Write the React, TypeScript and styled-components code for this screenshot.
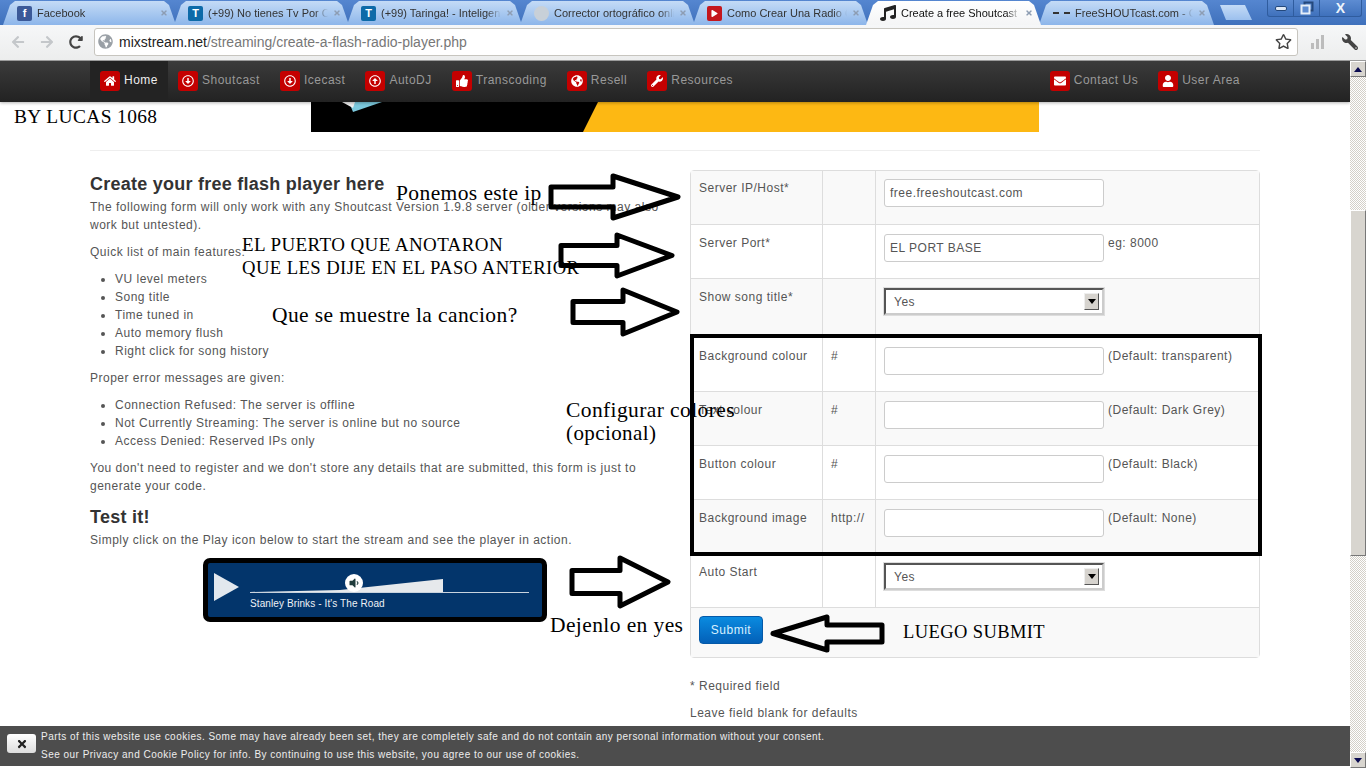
import React from "react";
import styled, { createGlobalStyle } from "styled-components";
import {
	FaHome,
	FaThumbsUp,
	FaGlobeAmericas,
	FaWrench,
	FaEnvelope,
	FaUser,
	FaRegArrowAltCircleDown,
	FaRegArrowAltCircleUp,
	FaPlay,
	FaTimes,
	FaMusic,
	FaRegStar,
	FaArrowLeft,
	FaArrowRight,
	FaRedoAlt,
	FaVolumeDown
} from "react-icons/fa";

const GlobalStyle = createGlobalStyle`
	html, body {
		margin: 0;
		padding: 0;
		height: 768px;
		overflow: hidden;
		background: #fff;
		font-family: "Liberation Sans", Arial, sans-serif;
	}
`;

const Shell = styled.div`
	width: 1366px;
	height: 768px;
	display: flex;
	flex-direction: column;
	position: relative;
	overflow: hidden;
`;

const TabStrip = styled.div`
	height: 25px;
	display: flex;
	align-items: flex-end;
	padding-left: 1px;
	background: linear-gradient(#5586d0, #3f71bc);
	position: relative;
`;

const Tab = styled.div<{ $active?: boolean }>`
	width: 177px;
	height: 24px;
	margin-right: -4px;
	padding: 0 10px 0 14px;
	box-sizing: border-box;
	display: flex;
	align-items: center;
	gap: 5px;
	font-size: 11px;
	color: ${p => (p.$active ? "#111" : "#333")};
	background: ${p => (p.$active ? "linear-gradient(#fff, #f4f5f6)" : "linear-gradient(#c4dbf6, #8db6ea)")};
	clip-path: polygon(0 100%, 7px 4px, 12px 0, calc(100% - 14px) 0, calc(100% - 9px) 4px, calc(100% - 2px) 100%);
	z-index: ${p => (p.$active ? 2 : 1)};
	&:first-child {
		width: 175px;
		margin-left: 2px;
	}
`;

const TabTitle = styled.span`
	flex: 1;
	white-space: nowrap;
	overflow: hidden;
	mask-image: linear-gradient(to right, #000 calc(100% - 14px), transparent);
`;

const TabClose = styled(FaTimes)`
	width: 8px;
	height: 8px;
	color: #8d9db3;
	flex: none;
`;

const FavSquare = styled.span<{ $bg: string; $round?: boolean }>`
	width: 15px;
	height: 15px;
	flex: none;
	display: flex;
	align-items: center;
	justify-content: center;
	background: ${p => p.$bg};
	border-radius: ${p => (p.$round ? "50%" : "2px")};
	color: #fff;
	font-weight: bold;
	font-size: 11px;
	line-height: 15px;
`;

const DashFav = styled.span`
	width: 17px;
	flex: none;
	border-top: 2px dashed #333;
`;

const NewTab = styled.div`
	width: 32px;
	height: 15px;
	margin-left: 8px;
	margin-bottom: 5px;
	background: linear-gradient(#c4dbf6, #9cc0ee);
	clip-path: polygon(0 0, calc(100% - 7px) 0, 100% 100%, 6px 100%);
`;

const WindowControls = styled.div`
	margin-left: auto;
	margin-right: 4px;
	align-self: flex-start;
	display: flex;
	height: 16px;
	border: 1px solid #2f5c9e;
	border-top: 0;
	border-radius: 0 0 3px 3px;
	background: linear-gradient(#5d8cd2, #3f71bc);
`;

const WindowButton = styled.div<{ $w: number }>`
	width: ${p => p.$w}px;
	display: flex;
	align-items: center;
	justify-content: center;
	border-right: 1px solid #2f5c9e;
	color: #eef4fb;
	font-size: 14px;
	font-weight: bold;
	&:last-child {
		border-right: 0;
	}
`;

const MinGlyph = styled.span`
	width: 10px;
	height: 3px;
	border: 1px solid #24487c;
	border-radius: 2px;
	background: #dfe9f6;
`;

const RestoreGlyph = styled.svg`
	width: 14px;
	height: 14px;
`;

const Toolbar = styled.div`
	height: 36px;
	box-sizing: border-box;
	padding: 4px 8px 6px 7px;
	display: flex;
	align-items: center;
	background: linear-gradient(#f6f7f8, #eceded);
	border-bottom: 1px solid #9b9b9b;
`;

const NavIcon = styled.span<{ $dark?: boolean }>`
	width: 21px;
	margin-right: 8px;
	display: flex;
	justify-content: center;
	color: ${p => (p.$dark ? "#444" : "#c4c7ca")};
	font-size: 14px;
`;

const Omnibox = styled.div`
	flex: 1;
	height: 26px;
	padding: 0 5px 0 3px;
	display: flex;
	align-items: center;
	gap: 6px;
	background: #fff;
	border: 1px solid #c7c5bf;
	border-radius: 3px;
	font-size: 14px;
	color: #222;
`;

const UrlPath = styled.span`
	color: #777;
`;

const UrlText = styled.span`
	flex: 1;
`;

const ToolIcons = styled.div`
	width: 60px;
	padding-left: 12px;
	box-sizing: border-box;
	display: flex;
	align-items: center;
	justify-content: space-between;
	color: #444;
	font-size: 16px;
	svg:last-child {
		transform: scaleX(-1);
	}
`;

const SignalBars = styled.svg`
	width: 15px;
	height: 15px;
	color: #bcbcbc;
`;

const Viewport = styled.div`
	flex: 1;
	min-height: 0;
	display: flex;
`;

const Page = styled.div`
	width: 1350px;
	position: relative;
	overflow: hidden;
	color: #555;
	font-size: 12px;
	letter-spacing: 0.5px;
`;

const SiteNav = styled.nav`
	height: 41px;
	padding: 0 100px 0 90px;
	box-sizing: border-box;
	display: flex;
	align-items: stretch;
	background: linear-gradient(#3b3b3b, #222);
	box-shadow: 0 1px 3px rgba(0, 0, 0, 0.3);
	position: relative;
	z-index: 2;
`;

const NavItem = styled.a<{ $active?: boolean }>`
	padding: 0 10px 4px;
	display: flex;
	align-items: center;
	gap: 4px;
	font-size: 12px;
	color: ${p => (p.$active ? "#eee" : "#999")};
	background: ${p => (p.$active ? "#232323" : "transparent")};
	&:nth-last-child(2) {
		margin-left: auto;
	}
`;

const NavBadge = styled.span`
	width: 20px;
	height: 20px;
	margin-top: 3px;
	display: flex;
	align-items: center;
	justify-content: center;
	background: #c40000;
	border-radius: 3px;
	color: #fff;
	font-size: 12px;
`;

const Banner = styled.svg`
	display: block;
	width: 728px;
	height: 30px;
	margin: 0 auto;
`;

const Content = styled.div`
	width: 1170px;
	margin: 18px auto 0;
`;

const Rule = styled.hr`
	margin: 0 0 19px;
	border: 0;
	border-top: 1px solid #eee;
`;

const Columns = styled.div`
	display: grid;
	grid-template-columns: 600px 570px;
`;

const LeftColumn = styled.div`
	padding-right: 20px;
`;

const Heading = styled.h2`
	margin: 4px 0 4px;
	font-size: 18px;
	line-height: 20px;
	letter-spacing: 0.25px;
	color: #333;
`;

const Para = styled.p`
	margin: 0 0 9px;
	line-height: 18px;
`;

const BulletList = styled.ul`
	margin: 0 0 9px;
	padding-left: 25px;
	line-height: 18px;
`;

const SubHeading = styled(Heading)`
	margin: 12px 0 4px;
`;

const Player = styled.div`
	width: 344px;
	height: 64px;
	margin: 7px 0 0 113px;
	box-sizing: border-box;
	padding: 10px 0 0 6px;
	display: flex;
	gap: 11px;
	background: #03356b;
	border: 5px solid #000;
	border-radius: 7px;
`;

const PlayIcon = styled.svg`
	width: 25px;
	height: 28px;
	flex: none;
`;

const PlayerBody = styled.div`
	flex: 1;
	position: relative;
`;

const WaveForm = styled.svg`
	display: block;
	width: 280px;
	height: 24px;
`;

const SpeakerKnob = styled.span`
	position: absolute;
	left: 95px;
	top: 1px;
	width: 18px;
	height: 18px;
	display: flex;
	align-items: center;
	justify-content: center;
	background: #fff;
	border-radius: 50%;
	color: #1f3b3b;
	font-size: 12px;
`;

const TrackName = styled.div`
	margin-top: 1px;
	font-size: 10px;
	color: #eef2f6;
	letter-spacing: 0.1px;
`;

const FormTable = styled.table`
	width: 570px;
	table-layout: fixed;
	border-collapse: separate;
	border-spacing: 0;
	border: 1px solid #ddd;
	border-radius: 4px;
`;

const Row = styled.tr<{ $shade?: boolean; $h?: number }>`
	background: ${p => (p.$shade ? "#f9f9f9" : "#fff")};
	height: ${p => p.$h || 54}px;
`;

const Cell = styled.td`
	padding: 9px 8px 8px;
	vertical-align: top;
	line-height: 18px;
	border-top: 1px solid #ddd;
	border-left: 1px solid #ddd;
	tr:first-child > & {
		border-top: 0;
		padding-top: 8px;
	}
	&:first-child {
		border-left: 0;
	}
`;

const FieldRow = styled.div`
	display: flex;
	gap: 4px;
	align-items: flex-start;
`;

const TextBox = styled.div`
	width: 220px;
	height: 28px;
	box-sizing: border-box;
	padding: 0 5px;
	flex: none;
	display: flex;
	align-items: center;
	background: #fff;
	border: 1px solid #ccc;
	border-radius: 3px;
`;

const SelectBox = styled.div`
	width: 220px;
	height: 27px;
	box-sizing: border-box;
	padding: 0 3px 0 8px;
	display: flex;
	align-items: center;
	justify-content: space-between;
	background: #fff;
	border: 2px solid;
	border-color: #555 #ccc #ccc #555;
	outline: 1px solid #ddd;
`;

const SelectArrow = styled.span`
	width: 15px;
	height: 17px;
	display: flex;
	align-items: center;
	justify-content: center;
	background: #d6d3ce;
	border: 1px solid;
	border-color: #eee #555 #555 #eee;
	box-sizing: border-box;
	&::after {
		content: "";
		border: 4px solid transparent;
		border-top: 5px solid #000;
		border-bottom: 0;
	}
`;

const SubmitButton = styled.button`
	width: 64px;
	height: 28px;
	display: block;
	margin-top: -1px;
	padding: 0;
	background: linear-gradient(#0a8be0, #0360b8);
	border: 1px solid #0459a8;
	border-radius: 4px;
	color: #d8f0ff;
	font: 12px "Liberation Sans", Arial, sans-serif;
	letter-spacing: 0.5px;
`;

const Notes = styled.div`
	margin-top: 19px;
`;

const CookieBar = styled.div`
	position: absolute;
	left: 0;
	right: 0;
	bottom: 2px;
	height: 40px;
	box-sizing: border-box;
	padding: 2px 0 0 7px;
	display: flex;
	align-items: flex-start;
	gap: 5px;
	background: #4d4d4d;
	color: #eee;
	font-size: 10px;
	letter-spacing: 0.48px;
	line-height: 18px;
	z-index: 3;
`;

const CookieClose = styled.span`
	width: 29px;
	height: 19px;
	margin-top: 6px;
	display: flex;
	align-items: center;
	justify-content: center;
	background: linear-gradient(#fff, #ddd);
	border-radius: 3px;
	color: #222;
	font-size: 12px;
`;

const Scrollbar = styled.div`
	width: 16px;
	display: flex;
	flex-direction: column;
	background: repeating-conic-gradient(#d4d0c8 0 25%, #fff 0 50%) 0 0 / 2px 2px;
`;

const ScrollButton = styled.div<{ $down?: boolean }>`
	height: 16px;
	flex: none;
	display: flex;
	align-items: center;
	justify-content: center;
	background: #d8d5cf;
	border: 1px solid;
	border-color: #fff #777 #777 #fff;
	box-sizing: border-box;
	margin-top: ${p => (p.$down ? "auto" : "0")};
	&::after {
		content: "";
		border: 4px solid transparent;
		${p => (p.$down ? "border-top: 5px solid #0a0a50; border-bottom: 0;" : "border-bottom: 5px solid #0a0a50; border-top: 0;")}
	}
`;

const ScrollThumb = styled.div`
	height: 346px;
	margin-top: 133px;
	flex: none;
	box-sizing: border-box;
	background: #d8d5cf;
	border: 1px solid;
	border-color: #fff #777 #777 #fff;
`;

const Overlay = styled.div`
	position: absolute;
	inset: 0;
	pointer-events: none;
	z-index: 4;
`;

const Note = styled.div<{ $x: number; $y: number; $size?: number }>`
	position: absolute;
	left: ${p => p.$x}px;
	top: ${p => p.$y}px;
	font-family: "Liberation Serif", "Times New Roman", serif;
	font-size: ${p => p.$size || 19}px;
	line-height: 22px;
	color: #000;
	white-space: nowrap;
	letter-spacing: 0.4px;
`;

const ArrowSvg = styled.svg<{ $x: number; $y: number }>`
	position: absolute;
	left: ${p => p.$x}px;
	top: ${p => p.$y}px;
	overflow: visible;
`;

const Frame = styled.div`
	position: absolute;
	left: 690px;
	top: 334px;
	width: 572px;
	height: 222px;
	box-sizing: border-box;
	border: 4px solid #000;
`;

const Arrow = ({ x, y, w, h, body, neck, left }: { x: number; y: number; w: number; h: number; body: number; neck: number; left?: boolean }) => {
	const top = (h - body) / 2;
	const points = left
		? `0,${h / 2} ${w - neck},0 ${w - neck},${top} ${w},${top} ${w},${top + body} ${w - neck},${top + body} ${w - neck},${h}`
		: `0,${top} ${neck},${top} ${neck},0 ${w},${h / 2} ${neck},${h} ${neck},${top + body} 0,${top + body}`;
	return (
		<ArrowSvg $x={x} $y={y} width={w} height={h} viewBox={`0 0 ${w} ${h}`}>
			<polygon points={points} fill="none" stroke="#000" strokeWidth="5" strokeLinejoin="round" />
		</ArrowSvg>
	);
};

const TABS = [
	{ title: "Facebook", fav: <FavSquare $bg="#3b5998">f</FavSquare> },
	{ title: "(+99) No tienes Tv Por C", fav: <FavSquare $bg="#0d6aa8">T</FavSquare> },
	{ title: "(+99) Taringa! - Inteligen", fav: <FavSquare $bg="#0d6aa8">T</FavSquare> },
	{ title: "Corrector ortográfico onlir", fav: <FavSquare $bg="#c8d0d8" $round /> },
	{ title: "Como Crear Una Radio Or", fav: <FavSquare $bg="#c4161c"><FaPlay size={7} /></FavSquare> },
	{ title: "Create a free Shoutcast F", fav: <FaMusic size={16} color="#222" />, active: true },
	{ title: "FreeSHOUTcast.com - Co", fav: <DashFav /> }
];

const NAV_ITEMS = [
	{ label: "Home", icon: <FaHome />, active: true },
	{ label: "Shoutcast", icon: <FaRegArrowAltCircleDown /> },
	{ label: "Icecast", icon: <FaRegArrowAltCircleDown /> },
	{ label: "AutoDJ", icon: <FaRegArrowAltCircleUp /> },
	{ label: "Transcoding", icon: <FaThumbsUp /> },
	{ label: "Resell", icon: <FaGlobeAmericas /> },
	{ label: "Resources", icon: <FaWrench /> },
	{ label: "Contact Us", icon: <FaEnvelope /> },
	{ label: "User Area", icon: <FaUser /> }
];

const COLOUR_ROWS = [
	{ label: "Background colour", prefix: "#", hint: "(Default: transparent)" },
	{ label: "Text colour", prefix: "#", hint: "(Default: Dark Grey)" },
	{ label: "Button colour", prefix: "#", hint: "(Default: Black)" },
	{ label: "Background image", prefix: "http://", hint: "(Default: None)" }
];

export default function App() {
	return (
		<Shell>
			<GlobalStyle />
			<TabStrip>
				{TABS.map(tab => (
					<Tab key={tab.title} $active={tab.active}>
						{tab.fav}
						<TabTitle>{tab.title}</TabTitle>
						<TabClose />
					</Tab>
				))}
				<NewTab />
				<WindowControls>
					<WindowButton $w={25}><MinGlyph /></WindowButton>
					<WindowButton $w={25}>
						<RestoreGlyph viewBox="0 0 14 14">
							<rect x="4.5" y="1.5" width="8" height="8" fill="none" stroke="#24487c" strokeWidth="2" />
							<rect x="1.5" y="4.5" width="8" height="8" fill="#5d8cd2" stroke="#e6eef8" strokeWidth="2" />
						</RestoreGlyph>
					</WindowButton>
					<WindowButton $w={41}>X</WindowButton>
				</WindowControls>
			</TabStrip>
			<Toolbar>
				<NavIcon><FaArrowLeft /></NavIcon>
				<NavIcon><FaArrowRight /></NavIcon>
				<NavIcon $dark><FaRedoAlt /></NavIcon>
				<Omnibox>
					<FaGlobeAmericas size={15} color="#9aa0a6" />
					<UrlText>mixstream.net<UrlPath>/streaming/create-a-flash-radio-player.php</UrlPath></UrlText>
					<FaRegStar size={17} color="#444" />
				</Omnibox>
				<ToolIcons>
					<SignalBars viewBox="0 0 15 15">
						<path d="M1 9h3v6H1zM6 5h3v10H6zM11 1h3v14h-3z" fill="currentColor" />
					</SignalBars>
					<FaWrench />
				</ToolIcons>
			</Toolbar>
			<Viewport>
				<Page>
					<SiteNav>
						{NAV_ITEMS.map(item => (
							<NavItem key={item.label} $active={item.active}>
								<NavBadge>{item.icon}</NavBadge>
								{item.label}
							</NavItem>
						))}
					</SiteNav>
					<Banner viewBox="0 0 728 30">
						<rect width="728" height="30" fill="#000" />
						<polygon points="287,0 728,0 728,30 272,30" fill="#fdb813" />
						<polygon points="38,0 71,0 42,10" fill="#7cc8dc" />
						<polygon points="31,0 44,0 42,6" fill="#eee" />
					</Banner>
					<Content>
						<Rule />
						<Columns>
							<LeftColumn>
								<Heading>Create your free flash player here</Heading>
								<Para>The following form will only work with any Shoutcast Version 1.9.8 server (older versions may also work but untested).</Para>
								<Para>Quick list of main features:</Para>
								<BulletList>
									<li>VU level meters</li>
									<li>Song title</li>
									<li>Time tuned in</li>
									<li>Auto memory flush</li>
									<li>Right click for song history</li>
								</BulletList>
								<Para>Proper error messages are given:</Para>
								<BulletList>
									<li>Connection Refused: The server is offline</li>
									<li>Not Currently Streaming: The server is online but no source</li>
									<li>Access Denied: Reserved IPs only</li>
								</BulletList>
								<Para>You don't need to register and we don't store any details that are submitted, this form is just to generate your code.</Para>
								<SubHeading>Test it!</SubHeading>
								<Para>Simply click on the Play icon below to start the stream and see the player in action.</Para>
								<Player>
									<PlayIcon viewBox="0 0 25 28">
										<polygon points="0,0 25,14 0,28" fill="#e2e8ee" />
									</PlayIcon>
									<PlayerBody>
										<WaveForm viewBox="0 0 280 24">
											<polygon points="0,19 90,17 193,6 193,19" fill="#e6e9ec" />
											<rect y="19" width="279" height="1" fill="#c9d3de" />
										</WaveForm>
										<SpeakerKnob><FaVolumeDown /></SpeakerKnob>
										<TrackName>Stanley Brinks - It's The Road</TrackName>
									</PlayerBody>
								</Player>
							</LeftColumn>
							<div>
								<FormTable>
									<colgroup>
										<col width="131" />
										<col width="53" />
										<col />
									</colgroup>
									<tbody>
										<Row $shade $h={53}>
											<Cell>Server IP/Host*</Cell>
											<Cell />
											<Cell><TextBox>free.freeshoutcast.com</TextBox></Cell>
										</Row>
										<Row>
											<Cell>Server Port*</Cell>
											<Cell />
											<Cell><FieldRow><TextBox>EL PORT BASE</TextBox>eg: 8000</FieldRow></Cell>
										</Row>
										<Row $shade $h={59}>
											<Cell>Show song title*</Cell>
											<Cell />
											<Cell><SelectBox>Yes<SelectArrow /></SelectBox></Cell>
										</Row>
										{COLOUR_ROWS.map((row, i) => (
											<Row key={row.label} $shade={i % 2 === 1}>
												<Cell>{row.label}</Cell>
												<Cell>{row.prefix}</Cell>
												<Cell><FieldRow><TextBox />{row.hint}</FieldRow></Cell>
											</Row>
										))}
										<Row>
											<Cell>Auto Start</Cell>
											<Cell />
											<Cell><SelectBox>Yes<SelectArrow /></SelectBox></Cell>
										</Row>
										<Row $shade $h={50}>
											<Cell colSpan={3}><SubmitButton>Submit</SubmitButton></Cell>
										</Row>
									</tbody>
								</FormTable>
								<Notes>
									<Para>* Required field</Para>
									<Para>Leave field blank for defaults</Para>
								</Notes>
							</div>
						</Columns>
					</Content>
					<CookieBar>
						<CookieClose><FaTimes /></CookieClose>
						<div>
							Parts of this website use cookies. Some may have already been set, they are completely safe and do not contain any personal information without your consent.
							<br />
							See our Privacy and Cookie Policy for info. By continuing to use this website, you agree to our use of cookies.
						</div>
					</CookieBar>
				</Page>
				<Scrollbar>
					<ScrollButton />
					<ScrollThumb />
					<ScrollButton $down />
				</Scrollbar>
			</Viewport>
			<Overlay>
				<Note $x={14} $y={106} $size={19.4}>BY LUCAS 1068</Note>
				<Note $x={396} $y={182} $size={21.5}>Ponemos este ip</Note>
				<Note $x={242} $y={234}>EL PUERTO QUE ANOTARON</Note>
				<Note $x={242} $y={257} $size={18.7}>QUE LES DIJE EN EL PASO ANTERIOR</Note>
				<Note $x={272} $y={304} $size={21.5}>Que se muestre la cancion?</Note>
				<Note $x={566} $y={399} $size={21.5}>Configurar colores</Note>
				<Note $x={566} $y={422} $size={21}>(opcional)</Note>
				<Note $x={550} $y={614} $size={21.5}>Dejenlo en yes</Note>
				<Note $x={903} $y={621} $size={18.5}>LUEGO SUBMIT</Note>
				<Arrow x={551} y={176} w={127} h={42} body={20} neck={62} />
				<Arrow x={561} y={235} w={111} h={41} body={20} neck={56} />
				<Arrow x={573} y={290} w={104} h={44} body={21} neck={50} />
				<Arrow x={572} y={558} w={96} h={48} body={23} neck={48} />
				<Arrow x={773} y={617} w={109} h={33} body={17} neck={55} left />
				<Frame />
			</Overlay>
		</Shell>
	);
}
